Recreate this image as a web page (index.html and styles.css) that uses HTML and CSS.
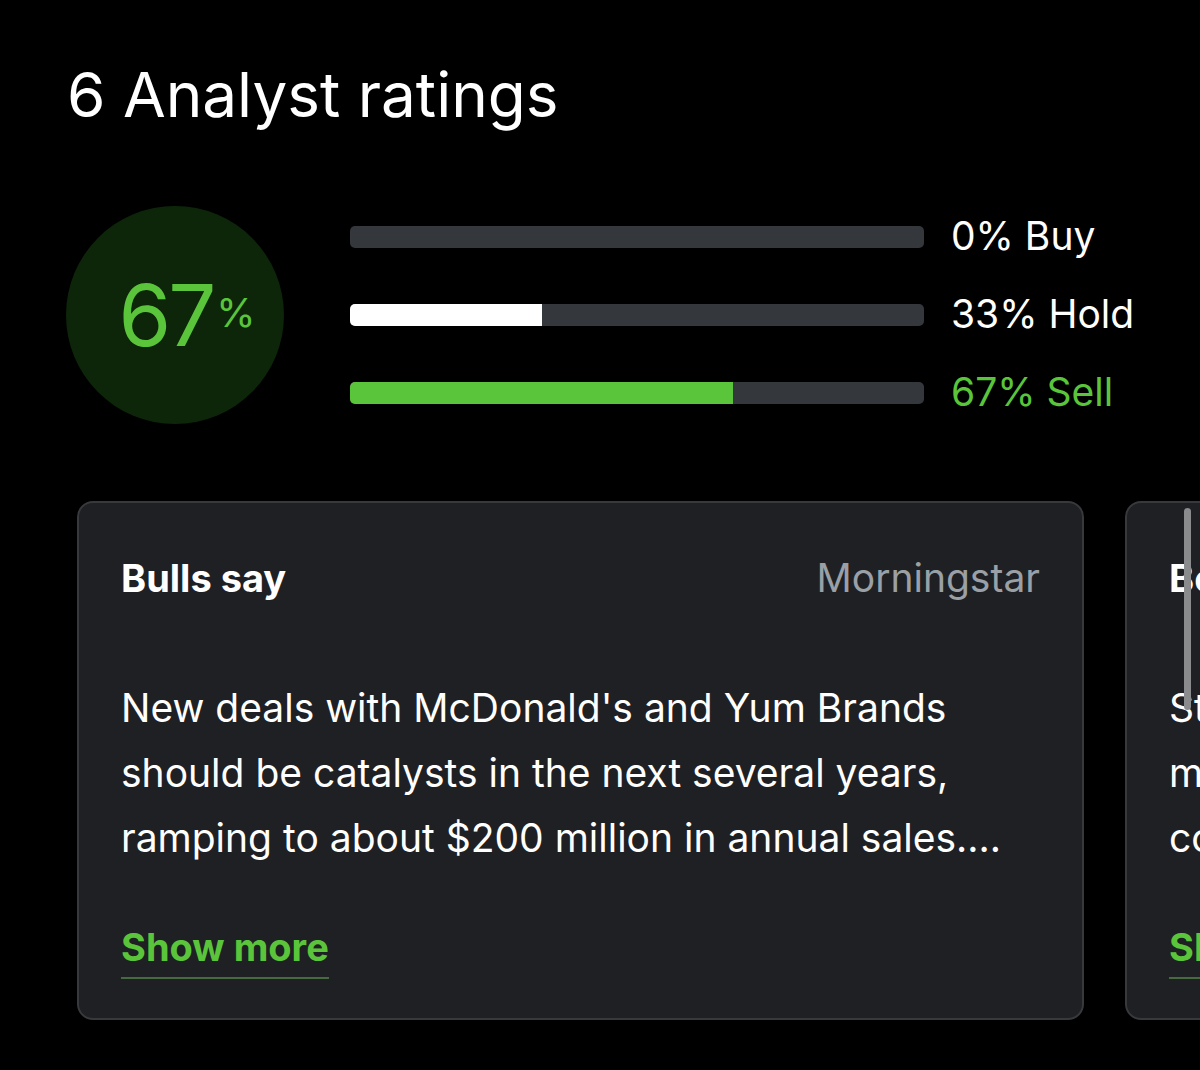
FILE: index.html
```html
<!DOCTYPE html>
<html lang="en">
<head>
<meta charset="utf-8">
<title>Analyst ratings</title>
<link rel="stylesheet" href="styles.css">
</head>
<body>
<main class="page">
  <h1 class="title">6 Analyst ratings</h1>
  <section class="summary">
    <div class="ring">
      <span class="ring-num">67</span><span class="ring-pct">%</span>
    </div>
    <div class="bars">
      <div class="bar-row">
        <div class="track"><div class="fill fill-white" style="width:0%"></div></div>
        <span class="bar-label">0% Buy</span>
      </div>
      <div class="bar-row">
        <div class="track"><div class="fill fill-white" style="width:33.4%"></div></div>
        <span class="bar-label">33% Hold</span>
      </div>
      <div class="bar-row">
        <div class="track"><div class="fill fill-green" style="width:66.7%"></div></div>
        <span class="bar-label label-green">67% Sell</span>
      </div>
    </div>
  </section>
  <section class="cards">
    <article class="card">
      <header class="card-head">
        <h2 class="card-title">Bulls say</h2>
        <span class="card-source">Morningstar</span>
      </header>
      <p class="card-text">New deals with McDonald's and Yum Brands should be catalysts in the next several years, ramping to about $200 million in annual sales....</p>
      <a class="show-more" href="#">Show more</a>
    </article>
    <article class="card">
      <header class="card-head">
        <h2 class="card-title">Bears say</h2>
        <span class="card-source">Morningstar</span>
      </header>
      <p class="card-text">Stiff competition from larger rivals could<br>make it harder to win new restaurant chains,<br>compressing margins in the next few years....</p>
      <a class="show-more" href="#">Show more</a>
    </article>
    <div class="scrollbar"></div>
  </section>
</main>
</body>
</html>
```

FILE: styles.css
```css
html, body {
  margin: 0;
  padding: 0;
  background: #000;
}
body {
  width: 1200px;
  height: 1070px;
  overflow: hidden;
  font-family: "Inter", "Roboto", "Liberation Sans", sans-serif;
  color: #fff;
}
.page {
  padding: 58px 0 0 0;
}
.title {
  margin: 0 0 0 67px;
  font-size: 62px;
  font-weight: 400;
  line-height: 74px;
}
.summary {
  display: flex;
  align-items: center;
  margin: 66px 0 0 66px;
}
.ring {
  box-sizing: border-box;
  width: 218px;
  height: 218px;
  padding-left: 24px;
  border-radius: 50%;
  background: #0d260a;
  display: flex;
  align-items: center;
  justify-content: center;
  color: #5ac53b;
  flex: none;
}
.ring-num {
  font-size: 85px;
  line-height: 1;
  letter-spacing: -3px;
}
.ring-pct {
  font-size: 40px;
  line-height: 1;
  margin-left: 3px;
  margin-bottom: 4px;
}
.bars {
  margin-left: 66px;
  display: flex;
  flex-direction: column;
}
.bar-row {
  display: flex;
  align-items: center;
  height: 78px;
}
.track {
  width: 574px;
  height: 22px;
  border-radius: 5px;
  background: #34373b;
  overflow: hidden;
  display: flex;
}
.fill {
  height: 100%;
}
.fill-white { background: #fff; }
.fill-green { background: #5ac53b; }
.bar-label {
  margin-left: 27px;
  margin-top: -3px;
  font-size: 39px;
  white-space: nowrap;
}
.label-green { color: #5ac53b; }

.cards {
  position: relative;
  display: flex;
  gap: 41px;
  margin: 69px 0 0 77px;
  overflow: hidden;
}
.card {
  flex: none;
  box-sizing: border-box;
  width: 1007px;
  height: 519px;
  background: #1f2023;
  border: 2px solid #37393d;
  border-radius: 16px;
  padding: 52px 42px 0 42px;
  display: flex;
  flex-direction: column;
}
.card-head {
  display: flex;
  justify-content: space-between;
  align-items: baseline;
}
.card-title {
  margin: 0;
  font-size: 38px;
  font-weight: 700;
  line-height: 46px;
}
.card-source {
  font-size: 39px;
  color: #9aa0a6;
  line-height: 46px;
}
.card-text {
  margin: 74px 0 0 0;
  height: 195px;
  overflow: hidden;
  font-size: 39px;
  line-height: 65px;
}
.show-more {
  align-self: flex-start;
  margin-top: 54px;
  font-size: 38px;
  font-weight: 700;
  color: #5ac53b;
  text-decoration: none;
  line-height: 46px;
  border-bottom: 2px solid #46693f;
  padding-bottom: 7px;
}
.scrollbar {
  position: absolute;
  left: 1107px;
  top: 7px;
  width: 7px;
  height: 202px;
  border-radius: 4px;
  background: #8a8b8d;
}
```
